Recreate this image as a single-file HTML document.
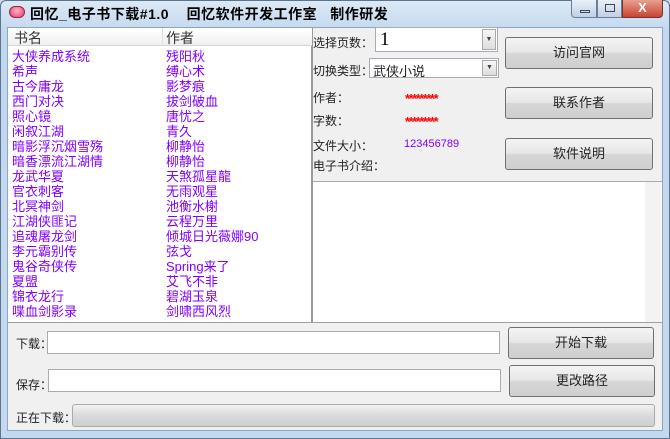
<!DOCTYPE html><html><head><meta charset="utf-8"><style>
*{margin:0;padding:0;box-sizing:border-box}
body{width:670px;height:439px;overflow:hidden;background:#c9dcf0;font-family:"Liberation Sans","WenQuanYi Zen Hei","Noto Sans CJK SC",sans-serif;font-size:12px;position:relative}
.a{position:absolute}
.frame{left:0;top:0;width:670px;height:439px;border:1px solid #5a7590;border-radius:6px 6px 0 0;background:linear-gradient(#dce9f6,#c3d8ee 30px,#c4d9ee)}
.client{left:7px;top:27px;width:656px;height:404px;background:#f0f0f0;border:1px solid #8ea7c0}
.list{left:8px;top:28px;width:304px;height:294px;background:#fff;border-right:1px solid #9a9a9a}
.hdr{left:0;top:0;width:304px;height:18px;background:linear-gradient(#fff,#f0f0f0);border-bottom:1px solid #d5d5d5;font-size:14px;color:#333}
.rows{left:4px;top:21px;color:#8000ff;font-size:13px;line-height:15px}
.rows div{height:15px;white-space:nowrap}
.rows span{position:absolute;left:154px}
.btn{border:1px solid #707070;border-radius:3px;background:linear-gradient(#f4f4f4 0,#e6e6e6 48%,#d6d6d6 52%,#cfcfcf);text-align:center;font-size:13px;color:#222}
.inp{background:#fff;border:1px solid #a5acb5}
.lbl{font-size:12px;color:#222}
</style></head><body>
<div class="a frame"></div>
<div class="a" style="left:9px;top:6px;width:16px;height:12px;border-radius:6px;background:radial-gradient(circle at 50% 35%,#ffb0c0,#e04070);border:1px solid #a02040"></div>
<div class="a" style="left:30px;top:4px;font-size:14px;font-weight:bold;letter-spacing:0.5px;white-space:nowrap">回忆_电子书下载#1.0&nbsp;&nbsp;&nbsp;&nbsp;回忆软件开发工作室&nbsp;&nbsp;&nbsp;制作研发</div>
<div class="a" style="left:571px;top:0;width:26px;height:18px;border:1px solid #6a7f96;border-top:0;border-radius:0 0 0 4px;background:linear-gradient(#e8f0f8,#c0d0e4)"><div class="a" style="left:8px;top:10px;width:10px;height:3px;border:1px solid #445"></div></div>
<div class="a" style="left:597px;top:0;width:25px;height:18px;border:1px solid #6a7f96;border-top:0;background:linear-gradient(#e8f0f8,#c0d0e4)"><div class="a" style="left:7px;top:4px;width:10px;height:8px;border:1px solid #445"></div></div>
<div class="a" style="left:622px;top:0;width:41px;height:18px;border:1px solid #7a3030;border-top:0;border-radius:0 0 4px 0;background:linear-gradient(#e8a090,#c84530);color:#fff;font-weight:bold;text-align:center;font-size:13px;line-height:16px">X</div>
<div class="a client"></div>
<div class="a list">
<div class="a hdr"><span class="a" style="left:6px;top:0">书名</span><span class="a" style="left:158px;top:0">作者</span><div class="a" style="left:154px;top:0;width:1px;height:18px;background:#e0e0e0"></div></div>
<div class="a rows">
<div>大侠养成系统<span>残阳秋</span></div><div>希声<span>缚心术</span></div><div>古今庸龙<span>影梦痕</span></div><div>西门对决<span>拔剑破血</span></div><div>照心镜<span>唐忧之</span></div><div>闲叙江湖<span>青久</span></div><div>暗影浮沉烟雪殇<span>柳静怡</span></div><div>暗香漂流江湖情<span>柳静怡</span></div><div>龙武华夏<span>天煞孤星龍</span></div><div>官衣刺客<span>无雨观星</span></div><div>北冥神剑<span>池衡水榭</span></div><div>江湖侠匪记<span>云程万里</span></div><div>追魂屠龙剑<span>倾城日光薇娜90</span></div><div>李元霸别传<span>弦戈</span></div><div>鬼谷奇侠传<span>Spring来了</span></div><div>夏盟<span>艾飞不非</span></div><div>锦衣龙行<span>碧湖玉泉</span></div><div>喋血剑影录<span>剑啸西风烈</span></div>
</div></div>
<div class="a" style="left:312px;top:28px;width:1px;height:294px;background:#9a9a9a"></div>
<div class="a lbl" style="left:313px;top:34px">选择页数：</div>
<div class="a inp" style="left:375px;top:27px;width:123px;height:25px"><span class="a" style="left:4px;top:1px;font-family:'Liberation Serif',serif;font-size:19px">1</span><div class="a" style="left:106px;top:1px;width:14px;height:21px;border:1px solid #aaa;background:linear-gradient(#f6f6f6,#ddd);font-size:7px;text-align:center;line-height:19px;color:#444">▼</div></div>
<div class="a lbl" style="left:313px;top:62px">切换类型：</div>
<div class="a inp" style="left:369px;top:58px;width:130px;height:20px"><span class="a lbl" style="left:3px;top:2px;font-size:13px">武侠小说</span><div class="a" style="left:112px;top:1px;width:15px;height:16px;border:1px solid #aaa;background:linear-gradient(#f6f6f6,#ddd);font-size:7px;text-align:center;line-height:14px;color:#444">▼</div></div>
<div class="a lbl" style="left:313px;top:89px">作者：</div>
<div class="a" style="left:405px;top:91px;color:#f00;font-size:13px;font-weight:bold;letter-spacing:-1.5px">*********</div>
<div class="a lbl" style="left:313px;top:112px">字数：</div>
<div class="a" style="left:405px;top:114px;color:#f00;font-size:13px;font-weight:bold;letter-spacing:-1.5px">*********</div>
<div class="a lbl" style="left:313px;top:137px">文件大小：</div>
<div class="a" style="left:404px;top:138px;color:#8000ff;font-size:11px">123456789</div>
<div class="a lbl" style="left:313px;top:157px">电子书介绍：</div>
<div class="a btn" style="left:505px;top:37px;width:148px;height:32px;line-height:30px">访问官网</div>
<div class="a btn" style="left:505px;top:87px;width:148px;height:32px;line-height:30px">联系作者</div>
<div class="a btn" style="left:505px;top:138px;width:148px;height:32px;line-height:30px">软件说明</div>
<div class="a" style="left:313px;top:181px;width:349px;height:141px;background:#fff;border-top:1px solid #aaa"><div class="a" style="left:332px;top:0;width:16px;height:140px;background:#f3f3f3"></div></div>
<div class="a" style="left:8px;top:322px;width:654px;height:1px;background:#a0a0a0"></div>
<div class="a lbl" style="left:16px;top:335px">下载：</div>
<div class="a inp" style="left:47px;top:331px;width:453px;height:23px"></div>
<div class="a btn" style="left:508px;top:327px;width:146px;height:32px;line-height:30px">开始下载</div>
<div class="a lbl" style="left:16px;top:376px">保存：</div>
<div class="a inp" style="left:48px;top:369px;width:453px;height:23px"></div>
<div class="a btn" style="left:509px;top:365px;width:146px;height:32px;line-height:30px">更改路径</div>
<div class="a lbl" style="left:16px;top:409px">正在下载：</div>
<div class="a" style="left:72px;top:404px;width:583px;height:23px;border:1px solid #aaa;border-radius:3px;background:linear-gradient(#f2f2f2,#dadada 50%,#cfcfcf)"></div>
</body></html>
